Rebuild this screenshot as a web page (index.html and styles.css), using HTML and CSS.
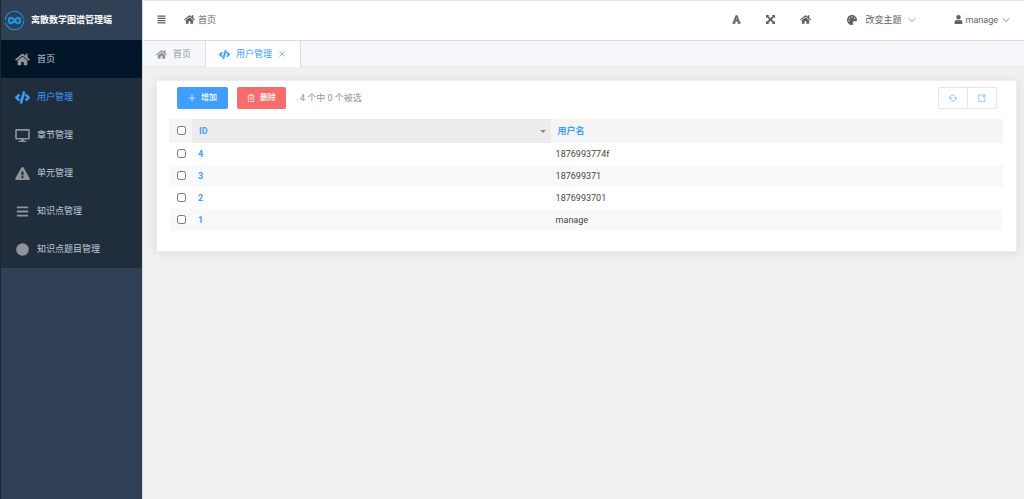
FILE: index.html
```html
<!DOCTYPE html>
<html lang="zh-CN">
<head>
<meta charset="utf-8">
<title>离散数学图谱管理端</title>
<link rel="stylesheet" href="styles.css">
</head>
<body>
<svg class="sprite" aria-hidden="true">
  <symbol id="home" viewBox="0 0 576 512"><path d="M280 148 96 300v164c0 9 7 16 16 16h112c9 0 16-7 16-16v-96c0-9 7-16 16-16h64c9 0 16 7 16 16v96c0 9 7 16 16 16h112c9 0 16-7 16-16V300L296 148a12 12 0 0 0-16 0zM572 251l-84-69V44c0-7-5-12-12-12h-56c-7 0-12 5-12 12v72l-89-74a48 48 0 0 0-61 0L4 251a12 12 0 0 0-2 17l26 31a12 12 0 0 0 17 2l235-194a12 12 0 0 1 15 0l235 194a12 12 0 0 0 17-2l26-31a12 12 0 0 0-1-17z"/></symbol>
  <symbol id="code" viewBox="0 0 640 512"><path class="heavy" d="M279 511l-61-17c-6-2-10-9-8-15L346 9c2-6 9-10 15-8l61 17c6 2 10 9 8 15L294 503c-2 6-9 10-15 8zM165 399l43-46c5-5 4-13-1-17l-91-80 91-80c5-4 6-12 1-17l-43-46c-5-5-12-5-17-1L4 247c-5 5-5 13 0 18l144 135c5 4 12 4 17-1zm327 1 144-135c5-5 5-13 0-18L492 112c-5-4-12-4-17 1l-43 46c-5 5-4 13 1 17l91 80-91 80c-5 4-6 12-1 17l43 46c5 5 12 5 17 1z"/></symbol>
  <symbol id="desktop" viewBox="0 0 576 512"><path d="M528 0H48a48 48 0 0 0-48 48v320a48 48 0 0 0 48 48h192l-16 48h-72a24 24 0 0 0 0 48h272a24 24 0 0 0 0-48h-72l-16-48h192a48 48 0 0 0 48-48V48a48 48 0 0 0-48-48zm-16 352H64V64h448z"/></symbol>
  <symbol id="warning" viewBox="0 0 576 512"><path fill-rule="evenodd" d="M570 440c18 32-5 72-42 72H48c-37 0-60-40-42-72L246 24c19-32 65-32 84 0zM288 354a46 46 0 1 0 0 92 46 46 0 0 0 0-92zm-44-165 8 136c0 6 5 11 12 11h48c7 0 12-5 12-11l8-136c0-7-5-13-12-13h-64c-7 0-12 6-12 13z"/></symbol>
  <symbol id="bars" viewBox="0 0 448 512"><path d="M16 132h416c9 0 16-7 16-16V76c0-9-7-16-16-16H16c-9 0-16 7-16 16v40c0 9 7 16 16 16zm0 160h416c9 0 16-7 16-16v-40c0-9-7-16-16-16H16c-9 0-16 7-16 16v40c0 9 7 16 16 16zm0 160h416c9 0 16-7 16-16v-40c0-9-7-16-16-16H16c-9 0-16 7-16 16v40c0 9 7 16 16 16z"/></symbol>
  <symbol id="circle" viewBox="0 0 512 512"><circle cx="256" cy="256" r="248"/></symbol>
  <symbol id="fold" viewBox="0 0 9 9"><path d="M.5.6h8v1.2h-8zM.5 2.800h8V4h-8zM.5 5h8v1.200h-8zM.5 7.200h8v1.200h-8z"/></symbol>
  <symbol id="font" viewBox="0 0 448 512"><path fill-rule="evenodd" class="heavy" d="M432 416h-23L277 43a16 16 0 0 0-15-11h-76a16 16 0 0 0-15 11L39 416H16a16 16 0 0 0-16 16v32a16 16 0 0 0 16 16h128a16 16 0 0 0 16-16v-32a16 16 0 0 0-16-16h-20l24-64h152l24 64h-20a16 16 0 0 0-16 16v32a16 16 0 0 0 16 16h128a16 16 0 0 0 16-16v-32a16 16 0 0 0-16-16zM176 272l48-142 48 142z"/></symbol>
  <symbol id="expand" viewBox="0 0 14 14"><path d="M0 0h5L3.600 1.500 7 4.900l3.400-3.400L9 0h5v5l-1.500-1.400L9.100 7l3.400 3.400L14 9v5H9l1.400-1.500L7 9.100l-3.400 3.400L5 14H0V9l1.500 1.400L4.900 7 1.500 3.600 0 5z"/></symbol>
  <symbol id="palette" viewBox="0 0 512 512"><path fill-rule="evenodd" d="M204 6C106 25 26 104 6 202c-37 189 131 327 258 308 42-6 62-55 43-92-23-45 10-99 61-99h80c35 0 64-29 64-65C511 95 369-26 204 6zM96 320a32 32 0 1 1 0-64 32 32 0 0 1 0 64zm32-128a32 32 0 1 1 0-64 32 32 0 0 1 0 64zm128-64a32 32 0 1 1 0-64 32 32 0 0 1 0 64zm128 64a32 32 0 1 1 0-64 32 32 0 0 1 0 64z"/></symbol>
  <symbol id="user" viewBox="0 0 448 512"><path d="M224 256a128 128 0 1 0 0-256 128 128 0 0 0 0 256zm90 32h-17a174 174 0 0 1-146 0h-17A134 134 0 0 0 0 422v42a48 48 0 0 0 48 48h352a48 48 0 0 0 48-48v-42a134 134 0 0 0-134-134z"/></symbol>
  <symbol id="down" viewBox="0 0 8 8"><path class="thin" d="M.7 2.200 4 5.600l3.300-3.400"/></symbol>
  <symbol id="close" viewBox="0 0 8 8"><path class="thin" d="m1.500 1.500 5 5m0-5-5 5"/></symbol>
  <symbol id="plus" viewBox="0 0 8 8"><path class="thin" d="M4 .6v6.800M.6 4h6.800"/></symbol>
  <symbol id="trash" viewBox="0 0 8 8"><path class="thin" d="M.4 1.800h7.200M2.600 1.600V.5h2.800v1.100M1.300 2v5.500h5.400V2M3.200 3.400v2.500m1.600-2.500v2.500"/></symbol>
  <symbol id="refresh" viewBox="0 0 8 8"><path class="thin" d="M1 4.800A3.100 3.100 0 0 1 5.800 1.500M7 3.200a3.100 3.100 0 0 1-4.800 3.300M1 3.200l.1 1.700 1.600-.3M7 4.800l-.1-1.700-1.600.3"/></symbol>
  <symbol id="share" viewBox="0 0 8 8"><path class="thin" d="M4.200 1H.8v6.300h6.100V4M5 .7h2.200v2.200H5z"/></symbol>
</svg>
<div class="app">
  <aside class="sidebar">
    <div class="brand">
      <svg class="brand-logo" viewBox="0 0 22 22"><circle cx="11" cy="11" r="9.700" stroke-width="1.100" stroke-dasharray="28 2.500"/><path stroke-width="2.200" d="M11 11C9.600 9.200 8.700 8.300 7.700 8.300a2.700 2.700 0 0 0 0 5.400c1 0 1.900-.9 3.300-2.700s2.300-2.700 3.300-2.700a2.700 2.700 0 0 1 0 5.400c-1 0-1.900-.9-3.300-2.700z"/></svg>
      <span>离散数学图谱管理端</span>
    </div>
    <nav class="menu">
      <a class="menu-item home" href="#"><svg class="icon"><use href="#home"/></svg>首页</a>
      <a class="menu-item current" href="#"><svg class="icon"><use href="#code"/></svg>用户管理</a>
      <a class="menu-item" href="#"><svg class="icon"><use href="#desktop"/></svg>章节管理</a>
      <a class="menu-item" href="#"><svg class="icon"><use href="#warning"/></svg>单元管理</a>
      <a class="menu-item" href="#"><svg class="icon"><use href="#bars"/></svg>知识点管理</a>
      <a class="menu-item" href="#"><svg class="icon"><use href="#circle"/></svg>知识点题目管理</a>
    </nav>
  </aside>
  <div class="content">
    <header class="topbar">
      <button class="plain" type="button" aria-label="折叠菜单"><svg class="icon small"><use href="#fold"/></svg></button>
      <a class="crumb" href="#"><svg class="icon"><use href="#home"/></svg>首页</a>
      <div class="tools">
        <button class="plain" type="button" aria-label="字体"><svg class="icon small"><use href="#font"/></svg></button>
        <button class="plain" type="button" aria-label="全屏"><svg class="icon small"><use href="#expand"/></svg></button>
        <button class="plain" type="button" aria-label="主页"><svg class="icon"><use href="#home"/></svg></button>
      </div>
      <button class="plain theme" type="button"><svg class="icon"><use href="#palette"/></svg><span>改变主题</span><svg class="icon arrow"><use href="#down"/></svg></button>
      <button class="plain account" type="button"><svg class="icon small"><use href="#user"/></svg><span>manage</span><svg class="icon arrow"><use href="#down"/></svg></button>
    </header>
    <nav class="tabs">
      <a class="tab" href="#"><svg class="icon"><use href="#home"/></svg>首页</a>
      <div class="tab active"><a href="#"><svg class="icon"><use href="#code"/></svg>用户管理</a><button class="plain" type="button" aria-label="关闭"><svg class="icon tiny"><use href="#close"/></svg></button></div>
    </nav>
    <main class="page">
      <section class="card">
        <div class="toolbar">
          <button class="btn add" type="button"><svg class="icon tiny"><use href="#plus"/></svg>增加</button>
          <button class="btn remove" type="button"><svg class="icon tiny"><use href="#trash"/></svg>删除</button>
          <span class="count">4 个中 0 个被选</span>
          <div class="btn-group">
            <button type="button" aria-label="刷新"><svg class="icon tiny"><use href="#refresh"/></svg></button>
            <button type="button" aria-label="新窗口"><svg class="icon tiny"><use href="#share"/></svg></button>
          </div>
        </div>
        <table class="grid">
          <thead>
            <tr><th class="pick"><input type="checkbox" aria-label="全选"></th><th class="id sorted"><div class="head"><a href="#">ID</a><span class="caret"></span></div></th><th><a href="#">用户名</a></th></tr>
          </thead>
          <tbody>
            <tr><td class="pick"><input type="checkbox" aria-label="选择 4"></td><td><a href="#">4</a></td><td>1876993774f</td></tr>
            <tr><td class="pick"><input type="checkbox" aria-label="选择 3"></td><td><a href="#">3</a></td><td>187699371</td></tr>
            <tr><td class="pick"><input type="checkbox" aria-label="选择 2"></td><td><a href="#">2</a></td><td>1876993701</td></tr>
            <tr><td class="pick"><input type="checkbox" aria-label="选择 1"></td><td><a href="#">1</a></td><td>manage</td></tr>
          </tbody>
        </table>
      </section>
    </main>
  </div>
</div>
</body>
</html>
```
FILE: styles.css
```css
* { box-sizing: border-box; }

body {
  margin: 0;
  font: 9px/12px Roboto, "Noto Sans CJK SC", sans-serif;
  color: #606266;
  background: #f0f0f0;
}

a { color: inherit; text-decoration: none; }
button { font: inherit; color: inherit; cursor: pointer; }

.sprite { position: absolute; width: 0; height: 0; }
.icon { width: 11px; height: 11px; fill: currentColor; flex: none; display: block; }
.icon.small { width: 9px; height: 9px; }
.icon.tiny, .icon.arrow { width: 8px; height: 8px; }
.thin { fill: none; stroke: currentColor; stroke-width: 0.7; }
.heavy { stroke: currentColor; stroke-width: 24; }
.plain { display: flex; align-items: center; padding: 0; border: 0; background: none; }

.app { display: flex; min-height: 100vh; }

.sidebar {
  flex: none;
  width: 143px;
  border-left: 1px solid #20262f;
  border-right: 1px solid #d5d9de;
  background: #304156;
}
.brand {
  display: flex;
  align-items: center;
  gap: 6px;
  height: 40px;
  padding-left: 3px;
  color: #fff;
  font-weight: 700;
  white-space: nowrap;
}
.brand-logo { width: 21px; height: 21px; fill: none; stroke: #1c94e8; }
.menu { background: #1f2d3d; }
.menu-item {
  display: flex;
  align-items: center;
  gap: 7px;
  height: 38px;
  padding-left: 14px;
  color: #bfcbd9;
}
.menu-item .icon { width: 15px; height: 13px; color: #909399; }
.menu-item.home { background: #001528; }
.menu-item.current, .menu-item.current .icon { color: #409eff; }

.content { flex: 1; min-width: 0; }
.topbar {
  display: flex;
  align-items: center;
  height: 41px;
  padding: 0 14px 2px;
  border-top: 1px solid #e4e4e4;
  border-bottom: 1px solid #d8dce5;
  background: #fff;
}
.crumb { display: flex; align-items: center; gap: 3px; margin-left: 18px; }
.tools { display: flex; gap: 25px; margin-left: auto; }
.theme { gap: 6px; margin-left: 36px; }
.theme .icon:first-child { width: 10px; height: 10px; margin-right: 3px; }
.account { gap: 3px; margin-left: 38px; }
.account .arrow { margin-left: 1px; }

.tabs {
  display: flex;
  height: 26px;
  border-bottom: 1px solid #e4e7ed;
  background: #f5f7fa;
}
.tab {
  display: flex;
  align-items: center;
  gap: 6px;
  height: 26px;
  padding: 0 14px 0 13px;
  color: #909399;
}
.tab a { display: flex; align-items: center; gap: 6px; }
.tab.active {
  border-left: 1px solid #dcdfe6;
  border-right: 1px solid #dcdfe6;
  background: #fff;
  color: #409eff;
}

.page { padding: 13px 7px 13px 13px; }
.card {
  padding: 6px 13px 20px 12px;
  background: #fff;
  border: 1px solid #ebeef5;
  box-shadow: 0 1px 8px rgba(0, 0, 0, 0.1);
}
.toolbar { display: flex; align-items: center; padding: 0 6px 0 8px; margin-bottom: 10px; }
.btn {
  display: flex;
  align-items: center;
  justify-content: center;
  gap: 5px;
  height: 22px;
  padding: 0 10px;
  border: 0;
  border-radius: 2px;
  color: #fff;
  font-size: 8px;
  font-weight: 500;
}
.add { background: #409eff; padding: 0 11px; }
.remove { background: #f56c6c; margin-left: 9px; }
.count { margin-left: 14px; color: #909399; }
.btn-group {
  display: flex;
  margin-left: auto;
  border: 1px solid #e4e7ed;
  border-radius: 2px;
}
.btn-group button {
  display: grid;
  place-items: center;
  width: 28px;
  height: 20px;
  padding: 0;
  border: 0;
  background: none;
  color: #66b1ff;
}
.btn-group button + button { width: 29px; border-left: 1px solid #e4e7ed; }

.grid { width: 100%; border-collapse: collapse; table-layout: fixed; color: #444; }
.grid th, .grid td { height: 22px; padding: 0 6px; text-align: left; }
.grid th { height: 24px; padding: 0 7px; background: #f5f5f5; }
.grid .sorted { background: #ececec; }
.grid .pick { width: 23px; padding: 0; }
.grid .id { width: 356px; width: 43%; }
.grid td:last-child { padding-left: 5px; }
.grid a { color: #409eff; font-weight: 700; }
.grid tbody tr:nth-child(even) { background: #f9f9f9; }
.grid input { display: block; width: 9px; height: 9px; margin: 0 0 2px 8px; }
.head { display: flex; align-items: center; justify-content: space-between; }
.caret { margin-right: -2px; border: 3px solid transparent; border-top-color: #888; border-bottom: 0; }
```
